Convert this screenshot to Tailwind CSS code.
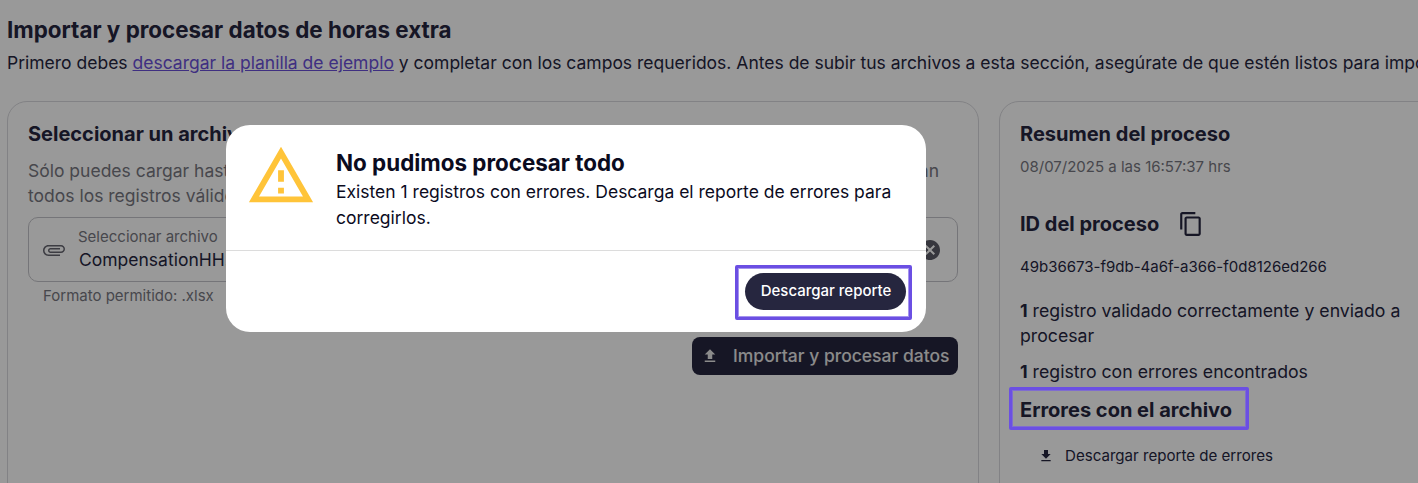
<!DOCTYPE html>
<html lang="es">
<head>
  <meta charset="UTF-8" />
  <title>Importar y procesar datos</title>
  <script src="https://cdn.jsdelivr.net/npm/@tailwindcss/browser@4"></script>
</head>
<body class="bg-white h-[483px] overflow-hidden relative font-['Inter',sans-serif] text-[#26263f]">
  <!-- Página de fondo -->
  <div class="pl-[7px] pt-[15px] w-[1418px] h-[483px] overflow-hidden">
    <h1 class="text-[22.4px] leading-[30px] font-bold">Importar y procesar datos de horas extra</h1>
    <p class="mt-[5px] text-[17.5px] leading-[26px] whitespace-nowrap">Primero debes <a href="#" class="underline text-[#6a4fd8]">descargar la planilla de ejemplo</a> y completar con los campos requeridos. Antes de subir tus archivos a esta sección, asegúrate de que estén listos para importar.</p>

    <div class="flex gap-[20px] mt-[25px] items-start w-[1500px]">
      <!-- Archivo -->
      <section class="w-[972px] h-[500px] shrink-0 border border-[#d9d9de] rounded-[20px] px-[20px] pt-[18px]">
        <h2 class="text-[20px] leading-[28px] font-bold">Seleccionar un archivo</h2>
        <div class="mt-[10px] text-[17.5px] leading-[25px] text-[#777780]">
          <p class="flex justify-between pr-[19px]"><span>Sólo puedes cargar hasta un archivo a la vez.</span><span>an</span></p>
          <p>todos los registros válidos del archivo.</p>
        </div>
        <div class="mt-[9px] h-[65px] border border-[#c4c4ca] rounded-[10px] flex items-center pl-[13px] pr-[15px]">
          <svg class="w-[24px] h-[24px] rotate-90 text-[#666670]" viewBox="0 0 24 24" fill="currentColor"><path d="M16.5 6v11.5c0 2.21-1.79 4-4 4s-4-1.79-4-4V5c0-1.38 1.12-2.5 2.5-2.5s2.5 1.12 2.5 2.5v10.5c0 .55-.45 1-1 1s-1-.45-1-1V6H10v9.5c0 1.38 1.12 2.5 2.5 2.5s2.5-1.12 2.5-2.5V5c0-2.21-1.79-4-4-4S7 2.79 7 5v12.5c0 3.04 2.46 5.5 5.5 5.5s5.5-2.46 5.5-5.5V6h-1.5z"/></svg>
          <div class="ml-[12px] flex-1">
            <div class="text-[15px] leading-[18px] text-[#777780]">Seleccionar archivo</div>
            <div class="text-[17.5px] leading-[24px] mt-[2px] pl-[1px]">CompensationHH.xlsx</div>
          </div>
          <svg class="w-[24px] h-[24px] text-[#5a5a66]" viewBox="0 0 24 24" fill="currentColor"><path d="M12 2C6.47 2 2 6.47 2 12s4.47 10 10 10 10-4.47 10-10S17.53 2 12 2zm5 13.59L15.59 17 12 13.41 8.41 17 7 15.59 10.59 12 7 8.41 8.41 7 12 10.59 15.59 7 17 8.41 13.41 12 17 15.59z"/></svg>
        </div>
        <p class="mt-[4px] pl-[15px] text-[15px] leading-[20px] text-[#777780]">Formato permitido: .xlsx</p>
        <div class="flex justify-end mt-[31px]">
          <button class="w-[266px] h-[38px] rounded-[8px] bg-[#26263f] flex items-center pl-[9px] text-[17.5px] font-medium text-[#e8e8e8]">
            <svg class="w-[18px] h-[18px]" viewBox="0 0 24 24" fill="currentColor"><path d="M9 16h6v-6h4l-7-7-7 7h4v6zm-4 2h14v2H5v-2z"/></svg>
            <span class="ml-[14px]">Importar y procesar datos</span>
          </button>
        </div>
      </section>

      <!-- Resumen -->
      <section class="w-[480px] h-[500px] shrink-0 border border-[#d9d9de] rounded-[20px] pl-[20px] pt-[18px]">
        <h2 class="text-[20px] leading-[28px] font-bold">Resumen del proceso</h2>
        <p class="mt-[9px] text-[15px] leading-[20px] text-[#777780]">08/07/2025 a las 16:57:37 hrs</p>
        <div class="mt-[31px] flex items-center h-[32px]">
          <h3 class="text-[20px] font-bold">ID del proceso</h3>
          <svg class="ml-[19px] w-[26px] h-[26px]" viewBox="0 0 24 24" fill="currentColor"><path d="M16 1H4c-1.1 0-2 .9-2 2v14h2V3h12V1zm3 4H8c-1.1 0-2 .9-2 2v14c0 1.1.9 2 2 2h11c1.1 0 2-.9 2-2V7c0-1.1-.9-2-2-2zm0 16H8V7h11v14z"/></svg>
        </div>
        <p class="mt-[17px] text-[15px] leading-[20px]">49b36673-f9db-4a6f-a366-f0d8126ed266</p>
        <p class="mt-[21px] w-[385px] text-[17.7px] leading-[25px]"><b class="font-bold">1</b> registro validado correctamente y enviado a procesar</p>
        <p class="mt-[11px] text-[17.7px] leading-[25px]"><b class="font-bold">1</b> registro con errores encontrados</p>
        <h3 class="mt-[12px] text-[20px] leading-[28px] font-bold">Errores con el archivo</h3>
        <div class="mt-[22px] pl-[18px] flex items-center text-[15.1px] leading-[20px]">
          <svg class="w-[16px] h-[16px]" viewBox="0 0 24 24" fill="currentColor"><path d="M19 9h-4V3H9v6H5l7 7 7-7zM5 18v2h14v-2H5z"/></svg>
          <span class="ml-[11px]">Descargar reporte de errores</span>
        </div>
      </section>
    </div>
  </div>

  <!-- Capa oscura -->
  <div class="absolute inset-0 bg-black/40"></div>

  <!-- Modal -->
  <div class="absolute left-[226px] top-[125px] w-[700px] h-[207px] bg-white rounded-[24px] text-[#0b0b1e]">
    <div class="h-[126px] border-b border-[#dcdcdc] flex pl-[20px] pt-[16px]">
      <svg class="w-[70px] h-[70px] shrink-0" viewBox="0 0 24 24" fill="#ffc439"><path d="M12 5.99 19.53 19H4.47L12 5.99M12 2 1 21h22L12 2zm1 14h-2v2h2v-2zm0-6h-2v4h2v-4z"/></svg>
      <div class="ml-[20px] w-[580px] pt-[8px]">
        <h2 class="text-[22.4px] leading-[28px] font-bold">No pudimos procesar todo</h2>
        <p class="mt-[2px] text-[17.5px] leading-[26px]">Existen 1 registros con errores. Descarga el reporte de errores para corregirlos.</p>
      </div>
    </div>
    <div class="flex justify-end pr-[20px] pt-[22px]">
      <button class="w-[161px] h-[37px] rounded-full bg-[#26263f] text-white text-[15px] font-medium pl-[1px]">Descargar reporte</button>
    </div>
  </div>

  <!-- Marcas de anotación -->
  <div class="absolute left-[735px] top-[265px] w-[177px] h-[55px] border-[3px] border-[#6b4fe3] rounded-[2px] shadow-[inset_0_0_0_1px_#a594ee]"></div>
  <div class="absolute left-[1009px] top-[387px] w-[240px] h-[43px] border-[3px] border-[#6b4fe3] rounded-[2px] shadow-[inset_0_0_0_1px_#7f6cd0]"></div>
</body>
</html>
